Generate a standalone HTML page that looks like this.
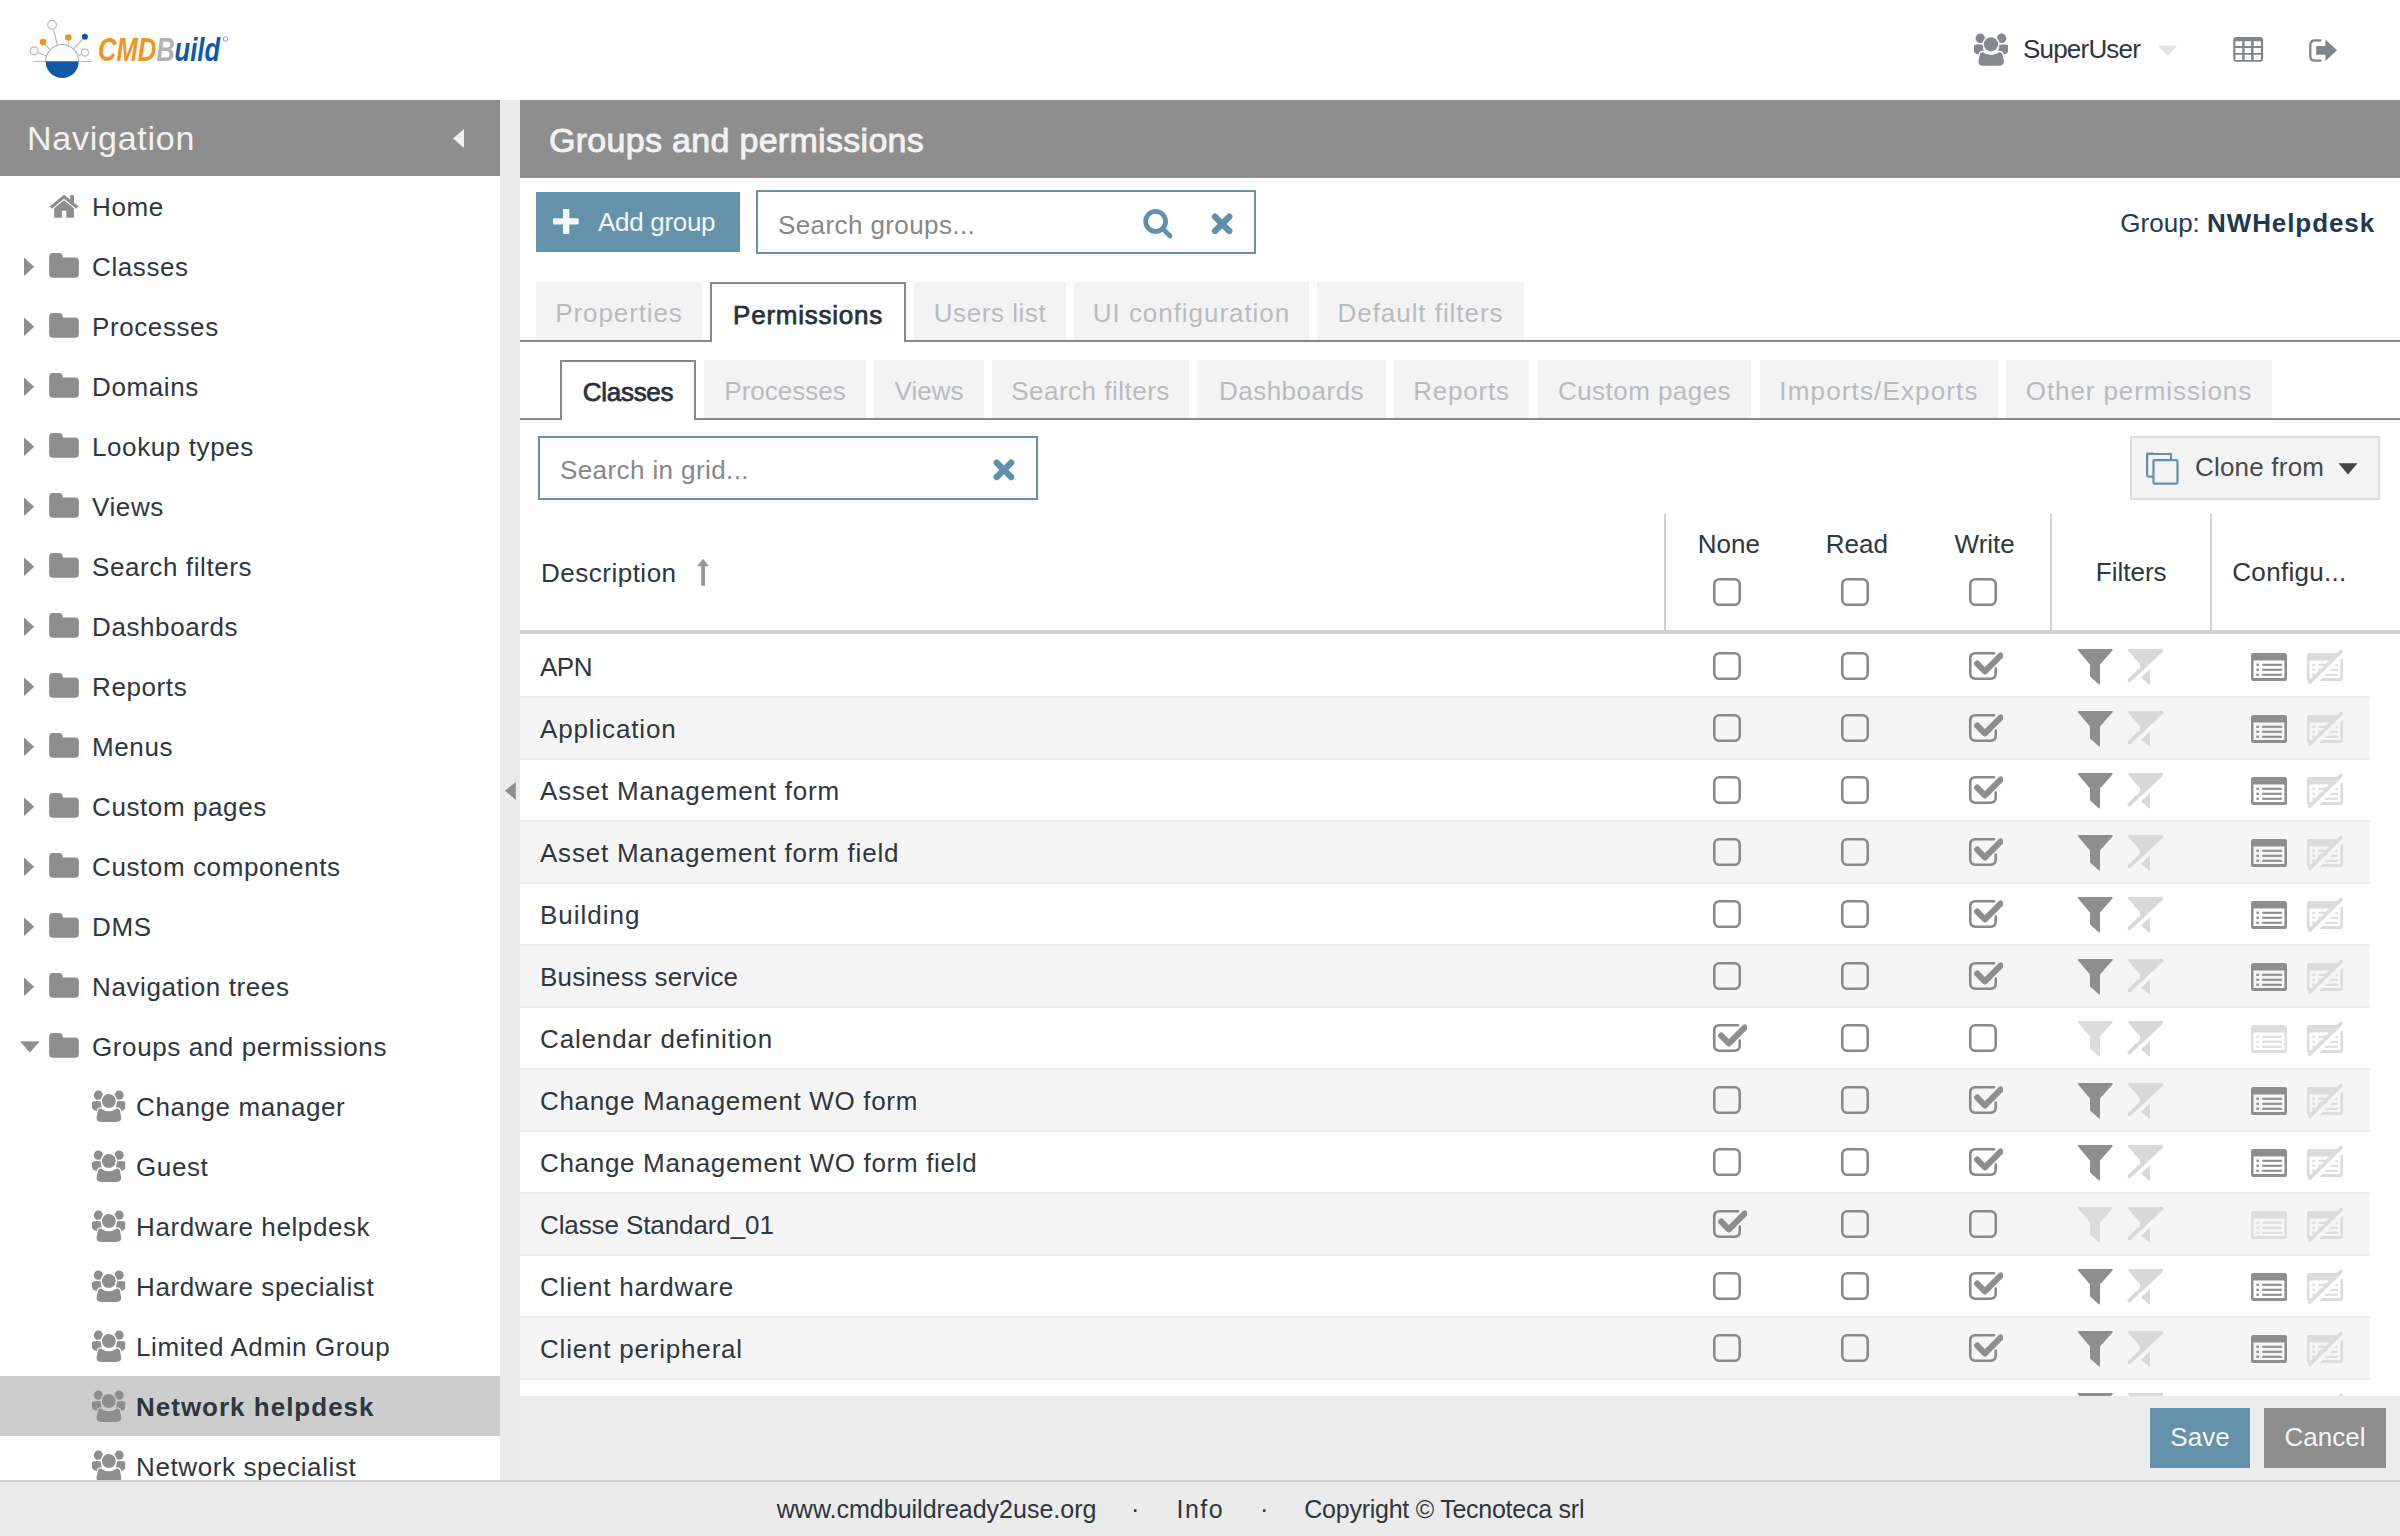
<!DOCTYPE html>
<html><head><meta charset="utf-8">
<style>
*{box-sizing:border-box;margin:0;padding:0}
html,body{width:2400px;height:1536px;overflow:hidden;background:#fff;font-family:"Liberation Sans",sans-serif;color:#2e363e}
.a{position:absolute}
.t{position:absolute;white-space:nowrap;line-height:1}
#top{left:0;top:0;width:2400px;height:100px;background:#fff}
#nav{left:0;top:100px;width:500px;height:1380px;background:#fff;overflow:hidden}
#navh{left:0;top:0;width:500px;height:76px;background:#8e8e8e}
#split{left:500px;top:100px;width:20px;height:1380px;background:#ebebeb}
#main{left:520px;top:100px;width:1880px;height:1296px;background:#fff;overflow:hidden}
#mainh{left:0;top:0;width:1880px;height:78px;background:#8e8e8e}
#bbar{left:520px;top:1396px;width:1880px;height:84px;background:#ececec}
#foot{left:0;top:1480px;width:2400px;height:56px;background:#ebebeb;border-top:2px solid #d2d2d2}
.ni{position:absolute;left:0;width:500px;height:60px}
.ni svg{color:#8e8e8e}
.ni .tx{position:absolute;top:1px;line-height:60px;font-size:26px;white-space:nowrap;letter-spacing:0.6px}
.tab{position:absolute;background:#f3f3f3;color:#b9bcbf;font-size:26px;text-align:center}
.tab.on{background:#fff;border:2px solid #888;border-bottom:none;color:#27313a;font-weight:bold}
.ni.sel{background:#cdcdcd}.ni.sel .tx{font-weight:bold;letter-spacing:1px}
.row{position:absolute;left:0;width:1850px;height:62px;border-top:2px solid #ececec}
.row.o{background:#f5f5f5}
.row .tx{position:absolute;left:20px;top:0;line-height:60px;font-size:26px}
</style></head><body>
<svg width="0" height="0" style="position:absolute">
<defs>
<symbol id="i-home" viewBox="0 0 100 60"><g fill="#8e8e8e"><path d="M50.9 31.5 L64 20.8 L77.4 31.5" fill="none" stroke="#8e8e8e" stroke-width="3.2"/><rect x="70.2" y="19.1" width="3.8" height="8"/><path d="M54.2 32.2 L64 24.2 L74 32.2 V41.8 H66.3 V34.7 H61.9 V41.8 H54.2Z"/></g></symbol>
<symbol id="i-trr" viewBox="0 0 100 60"><path d="M24 21.4 L34.2 30.7 L24 40Z" fill="#8e8e8e"/></symbol>
<symbol id="i-trd" viewBox="0 0 100 60"><path d="M20.8 25.8 L39 25.8 L29.9 36.2Z" fill="#8e8e8e" stroke="#8e8e8e" stroke-width="0.8" stroke-linejoin="round"/></symbol>
<symbol id="i-folder" viewBox="0 0 100 60"><path d="M53 17 H58.8 Q62.8 17 62.8 21 V21.5 H74.9 Q78.9 21.5 78.9 25.5 V37.8 Q78.9 41.8 74.9 41.8 H53.1 Q49.1 41.8 49.1 37.8 V21 Q49.1 17 53 17Z" fill="#8e8e8e"/></symbol>
<mask id="m-us" maskUnits="userSpaceOnUse" x="0" y="0" width="34" height="34"><rect width="34" height="34" fill="#fff"/><circle cx="17" cy="11" r="8.3" fill="#000"/><path d="M6 20 Q6.2 18 9 18 Q12.5 20.5 17 20.5 Q21.5 20.5 25 18 Q28 18 28.5 20 L29.8 27 Q30.2 32.3 24.5 32.3 H9.5 Q3.8 32.3 4.4 27Z" fill="#000" stroke="#000" stroke-width="1.4"/></mask>
<symbol id="i-users" viewBox="0 0 34 34" width="34" height="34"><g fill="currentColor"><g mask="url(#m-us)"><circle cx="6.6" cy="5.2" r="4.6"/><circle cx="27.3" cy="5.2" r="4.6"/><path d="M0.3 12 Q4 10.2 7.5 11.3 L9.6 11.3 Q8.8 16 10.6 19.6 Q8 21 4.5 20.8 Q0.2 20.3 0.1 16 Z"/><path d="M33.7 12 Q30 10.2 26.5 11.3 L24.4 11.3 Q25.2 16 23.4 19.6 Q26 21 29.5 20.8 Q33.8 20.3 33.9 16 Z"/></g><path d="M6.3 20.3 Q6.6 18.6 9 18.6 Q12.5 21.3 17 21.3 Q21.5 21.3 25 18.6 Q27.6 18.6 28 20.3 L29.4 27 Q29.8 31.9 24.5 31.9 H9.5 Q4.2 31.9 4.8 27Z"/><circle cx="17" cy="11" r="6.9"/></g></symbol>
<symbol id="i-cb" viewBox="0 0 32 32" width="32" height="32"><rect x="3.25" y="3.25" width="25.5" height="25.5" rx="5.2" fill="none" stroke="#8a8a8a" stroke-width="2.6"/></symbol>
<symbol id="i-cbc" viewBox="0 0 36 32" width="36" height="32"><path d="M27 3.25 H8.4 Q3.25 3.25 3.25 8.4 V23.6 Q3.25 28.75 8.4 28.75 H23.6 Q28.75 28.75 28.75 23.6 V18.6" fill="none" stroke="#8a8a8a" stroke-width="2.6" stroke-linecap="round"/><path d="M10.2 13.6 L17.9 21.4 L33.6 5.6" fill="none" stroke="#8e8e8e" stroke-width="6.2" stroke-linejoin="round" stroke-linecap="round"/></symbol>
<symbol id="i-fil" viewBox="0 0 60 46" width="60" height="46"><path fill="#8e8e8e" d="M8.8 5 H41.7 Q43.6 5 42.4 6.6 L30 20.4 V39.3 Q30 41.3 28.5 39.9 L20.6 33 Q20 32.4 20 31.4 V20.4 L8.1 6.6 Q6.9 5 8.8 5Z"/></symbol>
<symbol id="i-fild" viewBox="0 0 60 46" width="60" height="46"><path fill="#dcdcdc" d="M8.8 5 H41.7 Q43.6 5 42.4 6.6 L30 20.4 V39.3 Q30 41.3 28.5 39.9 L20.6 33 Q20 32.4 20 31.4 V20.4 L8.1 6.6 Q6.9 5 8.8 5Z"/></symbol>
<mask id="m-fo" maskUnits="userSpaceOnUse" x="0" y="0" width="60" height="46"><rect width="60" height="46" fill="#fff"/><line x1="11.2" y1="40" x2="44.8" y2="8.4" stroke="#000" stroke-width="4.2"/></mask>
<symbol id="i-filoff" viewBox="0 0 60 46" width="60" height="46"><path fill="#d9d9d9" d="M8.8 5 H41.7 Q43.6 5 42.4 6.6 L30 20.4 V39.3 Q30 41.3 28.5 39.9 L20.6 33 Q20 32.4 20 31.4 V20.4 L8.1 6.6 Q6.9 5 8.8 5Z" mask="url(#m-fo)"/><line x1="9.4" y1="36.4" x2="41.2" y2="6.5" stroke="#d9d9d9" stroke-width="3.8" stroke-linecap="round"/></symbol>
<symbol id="i-cfg" viewBox="0 0 60 46" width="60" height="46"><g fill="#8e8e8e"><path fill-rule="evenodd" d="M9.5 9 H40.5 Q43 9 43 11.5 V34.5 Q43 37 40.5 37 H9.5 Q7 37 7 34.5 V11.5 Q7 9 9.5 9Z M9.5 16.6 V34.1 H40.4 V16.6Z"/><rect x="12.4" y="19.6" width="2.4" height="2.4"/><rect x="12.4" y="24.6" width="2.4" height="2.4"/><rect x="12.4" y="29.6" width="2.4" height="2.4"/><rect x="18.2" y="19.75" width="19.7" height="2.1"/><rect x="18.2" y="24.75" width="19.7" height="2.1"/><rect x="18.2" y="29.75" width="19.7" height="2.1"/></g></symbol>
<symbol id="i-cfgd" viewBox="0 0 60 46" width="60" height="46"><g fill="#dedede"><path fill-rule="evenodd" d="M9.5 9 H40.5 Q43 9 43 11.5 V34.5 Q43 37 40.5 37 H9.5 Q7 37 7 34.5 V11.5 Q7 9 9.5 9Z M9.5 16.6 V34.1 H40.4 V16.6Z"/><rect x="12.4" y="19.6" width="2.4" height="2.4"/><rect x="12.4" y="24.6" width="2.4" height="2.4"/><rect x="12.4" y="29.6" width="2.4" height="2.4"/><rect x="18.2" y="19.75" width="19.7" height="2.1"/><rect x="18.2" y="24.75" width="19.7" height="2.1"/><rect x="18.2" y="29.75" width="19.7" height="2.1"/></g></symbol>
<mask id="m-co" maskUnits="userSpaceOnUse" x="0" y="0" width="60" height="46"><rect width="60" height="46" fill="#fff"/><line x1="11.5" y1="41.7" x2="44.1" y2="9.6" stroke="#000" stroke-width="4.2"/></mask>
<symbol id="i-cfgoff" viewBox="0 0 60 46" width="60" height="46"><g fill="#dcdcdc" mask="url(#m-co)"><path fill-rule="evenodd" d="M9.5 9 H40.5 Q43 9 43 11.5 V34.5 Q43 37 40.5 37 H9.5 Q7 37 7 34.5 V11.5 Q7 9 9.5 9Z M9.5 16.6 V34.1 H40.4 V16.6Z"/><rect x="12.4" y="19.6" width="2.4" height="2.4"/><rect x="12.4" y="24.6" width="2.4" height="2.4"/><rect x="12.4" y="29.6" width="2.4" height="2.4"/><rect x="18.2" y="19.75" width="19.7" height="2.1"/><rect x="18.2" y="24.75" width="19.7" height="2.1"/><rect x="18.2" y="29.75" width="19.7" height="2.1"/></g><line x1="9.8" y1="38.2" x2="41" y2="7.5" stroke="#dcdcdc" stroke-width="3.6" stroke-linecap="round"/></symbol>
</defs></svg>
<div id="top" class="a">
<svg class="a" style="left:0;top:0" width="240" height="100">
<g fill="none" stroke="#b9b9b9" stroke-width="1.2">
<line x1="33.3" y1="61.5" x2="91.5" y2="61.5"/>
<line x1="53.5" y1="29.7" x2="57.4" y2="45"/>
<line x1="44.5" y1="43.8" x2="49.6" y2="49.4"/>
<line x1="68.3" y1="41" x2="68.3" y2="45.3"/>
<line x1="82.7" y1="39.1" x2="74.1" y2="48.5"/>
<line x1="38" y1="52.5" x2="46" y2="56"/>
<line x1="81.5" y1="54.2" x2="78.5" y2="55.5"/>
<path d="M45.7 61.2 A16.5 16.5 0 0 1 78.7 61.2"/>
<circle cx="52.1" cy="24.7" r="4.4"/>
<circle cx="34.2" cy="50.8" r="3.9"/>
<circle cx="84.9" cy="52.6" r="3.5"/>
</g>
<path d="M45.7 61.6 A16.5 16.5 0 0 0 78.7 61.6Z" fill="#0c5aa6"/>
<circle cx="42.9" cy="42.1" r="3.3" fill="#f0951e"/>
<circle cx="68.3" cy="37.5" r="3.3" fill="#f0951e"/>
<circle cx="84.9" cy="36.8" r="3" fill="#0c5aa6"/>
<text x="98" y="61.4" font-family="Liberation Sans" font-weight="bold" font-style="italic" font-size="33.5" textLength="122" lengthAdjust="spacingAndGlyphs"><tspan fill="#f0951e">CMD</tspan><tspan fill="#b3b3b3">B</tspan><tspan fill="#0c5aa6">uild</tspan></text>
<circle cx="225.5" cy="39" r="2.2" fill="none" stroke="#5b8fc9" stroke-width="0.8"/>
</svg>
<svg class="a" style="left:1973px;top:33px;color:#85898e" width="36" height="36"><use href="#i-users" width="36" height="35"/></svg>
<span class="t" style="left:2023px;top:36px;font-size:26px;color:#2e363e;letter-spacing:-0.8px">SuperUser</span>
<svg class="a" style="left:2156px;top:44px" width="24" height="14"><path d="M2 1.8 L21 1.8 L11.5 12Z" fill="#e3e3e3"/></svg>
<svg class="a" style="left:2230px;top:34px" width="36" height="30"><g transform="translate(-2230 -34)"><path fill="#80858a" fill-rule="evenodd" d="M2236.3 37 H2260.1 Q2263.1 37 2263.1 40 V58.8 Q2263.1 61.8 2260.1 61.8 H2236.3 Q2233.3 61.8 2233.3 58.8 V40 Q2233.3 37 2236.3 37Z M2235.4 41.3 V45.9 H2242.2 V41.3Z M2244.6 41.3 V45.9 H2251.1 V41.3Z M2253.6 41.3 V45.9 H2260.9 V41.3Z M2235.4 48 V52.9 H2242.2 V48Z M2244.6 48 V52.9 H2251.1 V48Z M2253.6 48 V52.9 H2260.9 V48Z M2235.4 54.8 V59.9 H2242.2 V54.8Z M2244.6 54.8 V59.9 H2251.1 V54.8Z M2253.6 54.8 V59.9 H2260.9 V54.8Z"/></g></svg>
<svg class="a" style="left:2300px;top:34px" width="44" height="32"><g transform="translate(-2300 -34)"><path d="M2320.5 40.3 H2315 Q2310.3 40.3 2310.3 45 V56 Q2310.3 60.7 2315 60.7 H2320.5" fill="none" stroke="#80858a" stroke-width="2.3" stroke-linecap="round"/><path d="M2316.2 46.1 H2325.4 V39.6 L2337 50.3 L2325.4 61 V54.7 H2316.2Z" fill="#80858a"/></g></svg>
</div>
<div id="nav" class="a"><div id="navh" class="a"><span class="t" style="left:27px;top:0;line-height:76px;font-size:34px;color:#f2f2f2;letter-spacing:0.75px">Navigation</span><svg class="a" style="left:450px;top:26px" width="20" height="26"><path d="M14 3 L14 22 L3 12.5Z" fill="#f0f0f0"/></svg></div>
<div class="ni" style="top:76px"><svg class="a" style="left:0;top:0" width="100" height="60"><use href="#i-home"/></svg><span class="tx" style="left:92px">Home</span></div>
<div class="ni" style="top:136px"><svg class="a" style="left:0;top:0" width="100" height="60"><use href="#i-trr"/><use href="#i-folder"/></svg><span class="tx" style="left:92px">Classes</span></div>
<div class="ni" style="top:196px"><svg class="a" style="left:0;top:0" width="100" height="60"><use href="#i-trr"/><use href="#i-folder"/></svg><span class="tx" style="left:92px">Processes</span></div>
<div class="ni" style="top:256px"><svg class="a" style="left:0;top:0" width="100" height="60"><use href="#i-trr"/><use href="#i-folder"/></svg><span class="tx" style="left:92px">Domains</span></div>
<div class="ni" style="top:316px"><svg class="a" style="left:0;top:0" width="100" height="60"><use href="#i-trr"/><use href="#i-folder"/></svg><span class="tx" style="left:92px">Lookup types</span></div>
<div class="ni" style="top:376px"><svg class="a" style="left:0;top:0" width="100" height="60"><use href="#i-trr"/><use href="#i-folder"/></svg><span class="tx" style="left:92px">Views</span></div>
<div class="ni" style="top:436px"><svg class="a" style="left:0;top:0" width="100" height="60"><use href="#i-trr"/><use href="#i-folder"/></svg><span class="tx" style="left:92px">Search filters</span></div>
<div class="ni" style="top:496px"><svg class="a" style="left:0;top:0" width="100" height="60"><use href="#i-trr"/><use href="#i-folder"/></svg><span class="tx" style="left:92px">Dashboards</span></div>
<div class="ni" style="top:556px"><svg class="a" style="left:0;top:0" width="100" height="60"><use href="#i-trr"/><use href="#i-folder"/></svg><span class="tx" style="left:92px">Reports</span></div>
<div class="ni" style="top:616px"><svg class="a" style="left:0;top:0" width="100" height="60"><use href="#i-trr"/><use href="#i-folder"/></svg><span class="tx" style="left:92px">Menus</span></div>
<div class="ni" style="top:676px"><svg class="a" style="left:0;top:0" width="100" height="60"><use href="#i-trr"/><use href="#i-folder"/></svg><span class="tx" style="left:92px">Custom pages</span></div>
<div class="ni" style="top:736px"><svg class="a" style="left:0;top:0" width="100" height="60"><use href="#i-trr"/><use href="#i-folder"/></svg><span class="tx" style="left:92px">Custom components</span></div>
<div class="ni" style="top:796px"><svg class="a" style="left:0;top:0" width="100" height="60"><use href="#i-trr"/><use href="#i-folder"/></svg><span class="tx" style="left:92px">DMS</span></div>
<div class="ni" style="top:856px"><svg class="a" style="left:0;top:0" width="100" height="60"><use href="#i-trr"/><use href="#i-folder"/></svg><span class="tx" style="left:92px">Navigation trees</span></div>
<div class="ni" style="top:916px"><svg class="a" style="left:0;top:0" width="100" height="60"><use href="#i-trd"/><use href="#i-folder"/></svg><span class="tx" style="left:92px">Groups and permissions</span></div>
<div class="ni" style="top:976px"><svg class="a" style="left:0;top:0" width="140" height="60"><use href="#i-users" x="91.8" y="14" width="34" height="34"/></svg><span class="tx" style="left:136px">Change manager</span></div>
<div class="ni" style="top:1036px"><svg class="a" style="left:0;top:0" width="140" height="60"><use href="#i-users" x="91.8" y="14" width="34" height="34"/></svg><span class="tx" style="left:136px">Guest</span></div>
<div class="ni" style="top:1096px"><svg class="a" style="left:0;top:0" width="140" height="60"><use href="#i-users" x="91.8" y="14" width="34" height="34"/></svg><span class="tx" style="left:136px">Hardware helpdesk</span></div>
<div class="ni" style="top:1156px"><svg class="a" style="left:0;top:0" width="140" height="60"><use href="#i-users" x="91.8" y="14" width="34" height="34"/></svg><span class="tx" style="left:136px">Hardware specialist</span></div>
<div class="ni" style="top:1216px"><svg class="a" style="left:0;top:0" width="140" height="60"><use href="#i-users" x="91.8" y="14" width="34" height="34"/></svg><span class="tx" style="left:136px">Limited Admin Group</span></div>
<div class="ni sel" style="top:1276px"><svg class="a" style="left:0;top:0" width="140" height="60"><use href="#i-users" x="91.8" y="14" width="34" height="34"/></svg><span class="tx" style="left:136px">Network helpdesk</span></div>
<div class="ni" style="top:1336px"><svg class="a" style="left:0;top:0" width="140" height="60"><use href="#i-users" x="91.8" y="14" width="34" height="34"/></svg><span class="tx" style="left:136px">Network specialist</span></div>
</div>
<div id="split" class="a"></div>
<div id="main" class="a"></div>
<!--MAIN1-->
<div class="a" style="left:520px;top:100px;width:1880px;height:78px;background:#8e8e8e"></div>
<span class="t" style="left:549px;top:122.72px;font-size:34px;color:#f2f2f2;font-weight:normal;letter-spacing:0.3px;-webkit-text-stroke:0.9px #f2f2f2">Groups and permissions</span>
<div class="a" style="left:536px;top:192px;width:204px;height:60px;background:#6592ab"></div>
<svg class="a" style="left:550px;top:206px" width="32" height="32"><path d="M13 3 Q13 2.9 14 2.9 H18.3 Q19.3 2.9 19.3 3.9 V12.2 H27.6 Q28.7 12.2 28.7 13.2 V17.4 Q28.7 18.4 27.6 18.4 H19.3 V26.9 Q19.3 27.9 18.3 27.9 H14 Q13 27.9 13 26.9 V18.4 H3.9 Q2.9 18.4 2.9 17.4 V13.2 Q2.9 12.2 3.9 12.2 H13Z" fill="#f4f6f7"/></svg>
<span class="t" style="left:598px;top:209.49px;font-size:26px;color:#f4f6f7;font-weight:normal;letter-spacing:-0.3px">Add group</span>
<div class="a" style="left:756px;top:190px;width:500px;height:64px;border:2px solid #6592ab;background:#fff"></div>
<span class="t" style="left:778px;top:211.99px;font-size:26px;color:#878787;font-weight:normal;letter-spacing:0.4px">Search groups...</span>
<svg class="a" style="left:1130px;top:200px" width="120" height="48"><g transform="translate(-1130 -200)" stroke="#5f90ac" fill="none" stroke-linecap="round"><circle cx="1155.6" cy="221.4" r="10" stroke-width="4.7"/><line x1="1163.5" y1="229.5" x2="1170" y2="236" stroke-width="4.6"/><line x1="1215" y1="216.7" x2="1229.3" y2="231" stroke-width="6.3"/><line x1="1229.3" y1="216.7" x2="1215" y2="231" stroke-width="6.3"/></g></svg>
<span class="t" style="left:1575px;width:800px;text-align:right;top:210.49px;font-size:26px;color:#1d3a52;font-weight:normal;">Group: <b style="color:#1d3a52;letter-spacing:0.9px">NWHelpdesk</b></span>
<div class="a" style="left:520px;top:340px;width:1880px;height:2px;background:#888"></div>
<div class="a" style="left:536px;top:282px;width:166px;height:58px;background:#f3f3f3"></div>
<span class="t" style="left:319.0px;width:600px;text-align:center;top:299.69px;font-size:26px;color:#b9bcbf;font-weight:normal;letter-spacing:0.9px">Properties</span>
<div class="a" style="left:710px;top:282px;width:196px;height:60px;background:#fff;border:2px solid #888;border-bottom:none"></div>
<span class="t" style="left:508.0px;width:600px;text-align:center;top:302.19px;font-size:26px;color:#27313a;font-weight:normal;letter-spacing:0.75px;-webkit-text-stroke:0.75px #27313a">Permissions</span>
<div class="a" style="left:914px;top:282px;width:152px;height:58px;background:#f3f3f3"></div>
<span class="t" style="left:690.0px;width:600px;text-align:center;top:299.69px;font-size:26px;color:#b9bcbf;font-weight:normal;letter-spacing:0.55px">Users list</span>
<div class="a" style="left:1074px;top:282px;width:235px;height:58px;background:#f3f3f3"></div>
<span class="t" style="left:891.5px;width:600px;text-align:center;top:299.69px;font-size:26px;color:#b9bcbf;font-weight:normal;letter-spacing:0.95px">UI configuration</span>
<div class="a" style="left:1317px;top:282px;width:207px;height:58px;background:#f3f3f3"></div>
<span class="t" style="left:1120.5px;width:600px;text-align:center;top:299.69px;font-size:26px;color:#b9bcbf;font-weight:normal;letter-spacing:0.95px">Default filters</span>
<div class="a" style="left:520px;top:418px;width:1880px;height:2px;background:#888"></div>
<div class="a" style="left:560px;top:360px;width:136px;height:60px;background:#fff;border:2px solid #888;border-bottom:none"></div>
<span class="t" style="left:328.0px;width:600px;text-align:center;top:378.99px;font-size:26px;color:#27313a;font-weight:normal;letter-spacing:-0.3px;-webkit-text-stroke:0.75px #27313a">Classes</span>
<div class="a" style="left:704px;top:360px;width:162px;height:58px;background:#f3f3f3"></div>
<span class="t" style="left:485.0px;width:600px;text-align:center;top:377.69px;font-size:26px;color:#b9bcbf;font-weight:normal;letter-spacing:0px">Processes</span>
<div class="a" style="left:874px;top:360px;width:110px;height:58px;background:#f3f3f3"></div>
<span class="t" style="left:629.0px;width:600px;text-align:center;top:377.69px;font-size:26px;color:#b9bcbf;font-weight:normal;letter-spacing:0px">Views</span>
<div class="a" style="left:992px;top:360px;width:197px;height:58px;background:#f3f3f3"></div>
<span class="t" style="left:790.5px;width:600px;text-align:center;top:377.69px;font-size:26px;color:#b9bcbf;font-weight:normal;letter-spacing:0.5px">Search filters</span>
<div class="a" style="left:1197px;top:360px;width:189px;height:58px;background:#f3f3f3"></div>
<span class="t" style="left:991.5px;width:600px;text-align:center;top:377.69px;font-size:26px;color:#b9bcbf;font-weight:normal;letter-spacing:0.5px">Dashboards</span>
<div class="a" style="left:1394px;top:360px;width:135px;height:58px;background:#f3f3f3"></div>
<span class="t" style="left:1161.5px;width:600px;text-align:center;top:377.69px;font-size:26px;color:#b9bcbf;font-weight:normal;letter-spacing:0.8px">Reports</span>
<div class="a" style="left:1538px;top:360px;width:213px;height:58px;background:#f3f3f3"></div>
<span class="t" style="left:1344.5px;width:600px;text-align:center;top:377.69px;font-size:26px;color:#b9bcbf;font-weight:normal;letter-spacing:0.45px">Custom pages</span>
<div class="a" style="left:1760px;top:360px;width:238px;height:58px;background:#f3f3f3"></div>
<span class="t" style="left:1579.0px;width:600px;text-align:center;top:377.69px;font-size:26px;color:#b9bcbf;font-weight:normal;letter-spacing:1.15px">Imports/Exports</span>
<div class="a" style="left:2006px;top:360px;width:266px;height:58px;background:#f3f3f3"></div>
<span class="t" style="left:1839.0px;width:600px;text-align:center;top:377.69px;font-size:26px;color:#b9bcbf;font-weight:normal;letter-spacing:0.9px">Other permissions</span>
<div class="a" style="left:538px;top:436px;width:500px;height:64px;border:2px solid #6592ab;background:#fff"></div>
<span class="t" style="left:560px;top:456.99px;font-size:26px;color:#878787;font-weight:normal;letter-spacing:0.4px">Search in grid...</span>
<svg class="a" style="left:985px;top:450px" width="40" height="40"><g transform="translate(-985 -450)" stroke="#5f90ac" stroke-linecap="round"><line x1="996.7" y1="462.7" x2="1011.1" y2="477.1" stroke-width="6.3"/><line x1="1011.1" y1="462.7" x2="996.7" y2="477.1" stroke-width="6.3"/></g></svg>
<div class="a" style="left:2130px;top:436px;width:250px;height:64px;border:2px solid #dcdcdc;background:#f3f3f3"></div>
<svg class="a" style="left:2140px;top:446px" width="50" height="44"><g transform="translate(-2140 -446)" fill="none" stroke="#6592ab" stroke-width="2.2"><path d="M2153.5 453.6 H2148.4 Q2147.1 453.6 2147.1 454.9 V475.3 Q2147.1 476.6 2148.4 476.6 H2153.5"/><path d="M2147.1 453.6 V453.6"/><rect x="2153.5" y="460.2" width="24" height="23.5" rx="1.3"/><path d="M2147.1 460 V454 H2171 V460" stroke-linejoin="round"/></g></svg>
<span class="t" style="left:2195px;top:454.39px;font-size:26px;color:#444a50;font-weight:normal;letter-spacing:0.2px">Clone from</span>
<svg class="a" style="left:2334px;top:458px" width="28" height="22"><path d="M4.5 5.2 H23.5 L14 16.5Z" fill="#444"/></svg>
<!--/MAIN1-->
<!--GRID-->
<div class="a" style="left:520px;top:630px;width:1880px;height:4px;background:#d0d0d0"></div>
<div class="a" style="left:1664px;top:514px;width:2px;height:116px;background:#d0d0d0"></div>
<div class="a" style="left:2050px;top:514px;width:2px;height:116px;background:#d0d0d0"></div>
<div class="a" style="left:2210px;top:514px;width:2px;height:116px;background:#d0d0d0"></div>
<span class="t" style="left:541px;top:559.99px;font-size:26px;color:#2e363e;font-weight:normal;letter-spacing:0.5px">Description</span>
<svg class="a" style="left:694px;top:556px" width="18" height="32"><path d="M9 2.8 L15 10.2 H11 V29.8 H7.2 V10.2 H3Z" fill="#969696"/></svg>
<span class="t" style="left:1428.8px;width:600px;text-align:center;top:531.29px;font-size:26px;color:#2e363e;font-weight:normal;">None</span>
<span class="t" style="left:1556.8px;width:600px;text-align:center;top:531.29px;font-size:26px;color:#2e363e;font-weight:normal;">Read</span>
<span class="t" style="left:1684.7px;width:600px;text-align:center;top:531.29px;font-size:26px;color:#2e363e;font-weight:normal;">Write</span>
<span class="t" style="left:1831.1999999999998px;width:600px;text-align:center;top:558.99px;font-size:26px;color:#2e363e;font-weight:normal;">Filters</span>
<span class="t" style="left:2232.3px;top:558.99px;font-size:26px;color:#2e363e;font-weight:normal;letter-spacing:0.3px">Configu...</span>
<svg class="a" style="left:1711px;top:576px" width="32" height="32"><use href="#i-cb"/></svg>
<svg class="a" style="left:1839px;top:576px" width="32" height="32"><use href="#i-cb"/></svg>
<svg class="a" style="left:1967px;top:576px" width="32" height="32"><use href="#i-cb"/></svg>
<div class="a" style="left:520px;top:634px;width:1880px;height:762px;overflow:hidden">
<div class="a" style="left:0;top:0px;width:1850px;height:62px;background:#fff;border-top:2px solid #fff">
<span class="t" style="left:20px;top:17.79px;font-size:26px;letter-spacing:-0.5px">APN</span>
<svg class="a" style="left:1191px;top:14px" width="36" height="32"><use href="#i-cb"/></svg>
<svg class="a" style="left:1319px;top:14px" width="36" height="32"><use href="#i-cb"/></svg>
<svg class="a" style="left:1447px;top:14px" width="36" height="32"><use href="#i-cbc"/></svg>
<svg class="a" style="left:1550px;top:8px" width="300" height="46"><use href="#i-fil"/><use href="#i-filoff" x="50"/><use href="#i-cfg" x="174"/><use href="#i-cfgoff" x="230"/></svg>
</div>
<div class="a" style="left:0;top:62px;width:1850px;height:62px;background:#f5f5f5;border-top:2px solid #ececec">
<span class="t" style="left:20px;top:17.79px;font-size:26px;letter-spacing:0.85px">Application</span>
<svg class="a" style="left:1191px;top:14px" width="36" height="32"><use href="#i-cb"/></svg>
<svg class="a" style="left:1319px;top:14px" width="36" height="32"><use href="#i-cb"/></svg>
<svg class="a" style="left:1447px;top:14px" width="36" height="32"><use href="#i-cbc"/></svg>
<svg class="a" style="left:1550px;top:8px" width="300" height="46"><use href="#i-fil"/><use href="#i-filoff" x="50"/><use href="#i-cfg" x="174"/><use href="#i-cfgoff" x="230"/></svg>
</div>
<div class="a" style="left:0;top:124px;width:1850px;height:62px;background:#fff;border-top:2px solid #ececec">
<span class="t" style="left:20px;top:17.79px;font-size:26px;letter-spacing:0.8px">Asset Management form</span>
<svg class="a" style="left:1191px;top:14px" width="36" height="32"><use href="#i-cb"/></svg>
<svg class="a" style="left:1319px;top:14px" width="36" height="32"><use href="#i-cb"/></svg>
<svg class="a" style="left:1447px;top:14px" width="36" height="32"><use href="#i-cbc"/></svg>
<svg class="a" style="left:1550px;top:8px" width="300" height="46"><use href="#i-fil"/><use href="#i-filoff" x="50"/><use href="#i-cfg" x="174"/><use href="#i-cfgoff" x="230"/></svg>
</div>
<div class="a" style="left:0;top:186px;width:1850px;height:62px;background:#f5f5f5;border-top:2px solid #ececec">
<span class="t" style="left:20px;top:17.79px;font-size:26px;letter-spacing:0.78px">Asset Management form field</span>
<svg class="a" style="left:1191px;top:14px" width="36" height="32"><use href="#i-cb"/></svg>
<svg class="a" style="left:1319px;top:14px" width="36" height="32"><use href="#i-cb"/></svg>
<svg class="a" style="left:1447px;top:14px" width="36" height="32"><use href="#i-cbc"/></svg>
<svg class="a" style="left:1550px;top:8px" width="300" height="46"><use href="#i-fil"/><use href="#i-filoff" x="50"/><use href="#i-cfg" x="174"/><use href="#i-cfgoff" x="230"/></svg>
</div>
<div class="a" style="left:0;top:248px;width:1850px;height:62px;background:#fff;border-top:2px solid #ececec">
<span class="t" style="left:20px;top:17.79px;font-size:26px;letter-spacing:1.0px">Building</span>
<svg class="a" style="left:1191px;top:14px" width="36" height="32"><use href="#i-cb"/></svg>
<svg class="a" style="left:1319px;top:14px" width="36" height="32"><use href="#i-cb"/></svg>
<svg class="a" style="left:1447px;top:14px" width="36" height="32"><use href="#i-cbc"/></svg>
<svg class="a" style="left:1550px;top:8px" width="300" height="46"><use href="#i-fil"/><use href="#i-filoff" x="50"/><use href="#i-cfg" x="174"/><use href="#i-cfgoff" x="230"/></svg>
</div>
<div class="a" style="left:0;top:310px;width:1850px;height:62px;background:#f5f5f5;border-top:2px solid #ececec">
<span class="t" style="left:20px;top:17.79px;font-size:26px;letter-spacing:0.2px">Business service</span>
<svg class="a" style="left:1191px;top:14px" width="36" height="32"><use href="#i-cb"/></svg>
<svg class="a" style="left:1319px;top:14px" width="36" height="32"><use href="#i-cb"/></svg>
<svg class="a" style="left:1447px;top:14px" width="36" height="32"><use href="#i-cbc"/></svg>
<svg class="a" style="left:1550px;top:8px" width="300" height="46"><use href="#i-fil"/><use href="#i-filoff" x="50"/><use href="#i-cfg" x="174"/><use href="#i-cfgoff" x="230"/></svg>
</div>
<div class="a" style="left:0;top:372px;width:1850px;height:62px;background:#fff;border-top:2px solid #ececec">
<span class="t" style="left:20px;top:17.79px;font-size:26px;letter-spacing:0.85px">Calendar definition</span>
<svg class="a" style="left:1191px;top:14px" width="36" height="32"><use href="#i-cbc"/></svg>
<svg class="a" style="left:1319px;top:14px" width="36" height="32"><use href="#i-cb"/></svg>
<svg class="a" style="left:1447px;top:14px" width="36" height="32"><use href="#i-cb"/></svg>
<svg class="a" style="left:1550px;top:8px" width="300" height="46"><use href="#i-fild"/><use href="#i-filoff" x="50"/><use href="#i-cfgd" x="174"/><use href="#i-cfgoff" x="230"/></svg>
</div>
<div class="a" style="left:0;top:434px;width:1850px;height:62px;background:#f5f5f5;border-top:2px solid #ececec">
<span class="t" style="left:20px;top:17.79px;font-size:26px;letter-spacing:0.67px">Change Management WO form</span>
<svg class="a" style="left:1191px;top:14px" width="36" height="32"><use href="#i-cb"/></svg>
<svg class="a" style="left:1319px;top:14px" width="36" height="32"><use href="#i-cb"/></svg>
<svg class="a" style="left:1447px;top:14px" width="36" height="32"><use href="#i-cbc"/></svg>
<svg class="a" style="left:1550px;top:8px" width="300" height="46"><use href="#i-fil"/><use href="#i-filoff" x="50"/><use href="#i-cfg" x="174"/><use href="#i-cfgoff" x="230"/></svg>
</div>
<div class="a" style="left:0;top:496px;width:1850px;height:62px;background:#fff;border-top:2px solid #ececec">
<span class="t" style="left:20px;top:17.79px;font-size:26px;letter-spacing:0.68px">Change Management WO form field</span>
<svg class="a" style="left:1191px;top:14px" width="36" height="32"><use href="#i-cb"/></svg>
<svg class="a" style="left:1319px;top:14px" width="36" height="32"><use href="#i-cb"/></svg>
<svg class="a" style="left:1447px;top:14px" width="36" height="32"><use href="#i-cbc"/></svg>
<svg class="a" style="left:1550px;top:8px" width="300" height="46"><use href="#i-fil"/><use href="#i-filoff" x="50"/><use href="#i-cfg" x="174"/><use href="#i-cfgoff" x="230"/></svg>
</div>
<div class="a" style="left:0;top:558px;width:1850px;height:62px;background:#f5f5f5;border-top:2px solid #ececec">
<span class="t" style="left:20px;top:17.79px;font-size:26px;letter-spacing:-0.1px">Classe Standard_01</span>
<svg class="a" style="left:1191px;top:14px" width="36" height="32"><use href="#i-cbc"/></svg>
<svg class="a" style="left:1319px;top:14px" width="36" height="32"><use href="#i-cb"/></svg>
<svg class="a" style="left:1447px;top:14px" width="36" height="32"><use href="#i-cb"/></svg>
<svg class="a" style="left:1550px;top:8px" width="300" height="46"><use href="#i-fild"/><use href="#i-filoff" x="50"/><use href="#i-cfgd" x="174"/><use href="#i-cfgoff" x="230"/></svg>
</div>
<div class="a" style="left:0;top:620px;width:1850px;height:62px;background:#fff;border-top:2px solid #ececec">
<span class="t" style="left:20px;top:17.79px;font-size:26px;letter-spacing:0.8px">Client hardware</span>
<svg class="a" style="left:1191px;top:14px" width="36" height="32"><use href="#i-cb"/></svg>
<svg class="a" style="left:1319px;top:14px" width="36" height="32"><use href="#i-cb"/></svg>
<svg class="a" style="left:1447px;top:14px" width="36" height="32"><use href="#i-cbc"/></svg>
<svg class="a" style="left:1550px;top:8px" width="300" height="46"><use href="#i-fil"/><use href="#i-filoff" x="50"/><use href="#i-cfg" x="174"/><use href="#i-cfgoff" x="230"/></svg>
</div>
<div class="a" style="left:0;top:682px;width:1850px;height:62px;background:#f5f5f5;border-top:2px solid #ececec">
<span class="t" style="left:20px;top:17.79px;font-size:26px;letter-spacing:0.8px">Client peripheral</span>
<svg class="a" style="left:1191px;top:14px" width="36" height="32"><use href="#i-cb"/></svg>
<svg class="a" style="left:1319px;top:14px" width="36" height="32"><use href="#i-cb"/></svg>
<svg class="a" style="left:1447px;top:14px" width="36" height="32"><use href="#i-cbc"/></svg>
<svg class="a" style="left:1550px;top:8px" width="300" height="46"><use href="#i-fil"/><use href="#i-filoff" x="50"/><use href="#i-cfg" x="174"/><use href="#i-cfgoff" x="230"/></svg>
</div>
<div class="a" style="left:0;top:744px;width:1850px;height:62px;background:#fff;border-top:2px solid #ececec">
<span class="t" style="left:20px;top:17.79px;font-size:26px;letter-spacing:0.7px">Client software</span>
<svg class="a" style="left:1191px;top:14px" width="36" height="32"><use href="#i-cb"/></svg>
<svg class="a" style="left:1319px;top:14px" width="36" height="32"><use href="#i-cb"/></svg>
<svg class="a" style="left:1447px;top:14px" width="36" height="32"><use href="#i-cbc"/></svg>
<svg class="a" style="left:1550px;top:8px" width="300" height="46"><use href="#i-fil"/><use href="#i-filoff" x="50"/><use href="#i-cfg" x="174"/><use href="#i-cfgoff" x="230"/></svg>
</div>
</div>
<!--/GRID-->
<div id="bbar" class="a"></div>
<div id="foot" class="a"></div>
<svg class="a" style="left:500px;top:770px" width="20" height="40"><path d="M15.8 11.7 V29.9 L5 20.8Z" fill="#8e8e8e"/></svg>
<div class="a" style="left:2150px;top:1408px;width:100px;height:60px;background:#6592ab"></div>
<span class="t" style="left:2150px;width:100px;text-align:center;top:1423.8px;font-size:26px;color:#f4f6f7">Save</span>
<div class="a" style="left:2264px;top:1408px;width:122px;height:60px;background:#8e8e8e"></div>
<span class="t" style="left:2264px;width:122px;text-align:center;top:1423.8px;font-size:26px;color:#f4f6f7">Cancel</span>
<span class="t" style="left:776.8px;top:1496.6px;font-size:25px;color:#2e363e">www.cmdbuildready2use.org</span>
<span class="t" style="left:1131px;top:1496.6px;font-size:25px;color:#2e363e">·</span>
<span class="t" style="left:1176.5px;top:1496.6px;font-size:25px;color:#2e363e;letter-spacing:1.5px">Info</span>
<span class="t" style="left:1260px;top:1496.6px;font-size:25px;color:#2e363e">·</span>
<span class="t" style="left:1304.3px;top:1496.6px;font-size:25px;color:#2e363e;letter-spacing:-0.25px">Copyright © Tecnoteca srl</span>

</body></html>
